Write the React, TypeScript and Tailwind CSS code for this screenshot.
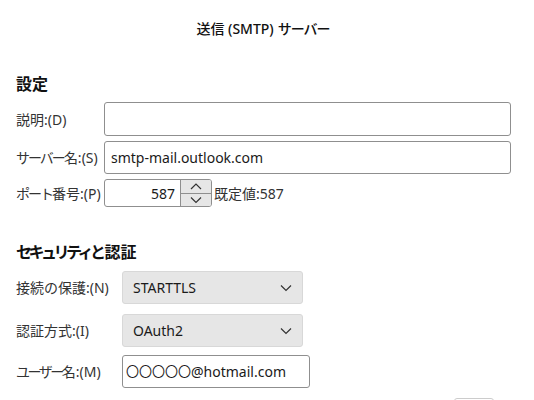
import React from 'react';

const FONT = "font-['Noto_Sans','Noto_Sans_CJK_JP',sans-serif]";

const Chevron: React.FC<{ up?: boolean; className?: string }> = ({ up, className }) => (
  <svg viewBox="0 0 12 8" className={className} fill="none" stroke="#333" strokeWidth={1.2}>
    {up ? <polyline points="1,7 6,2 11,7" /> : <polyline points="1,1.5 6,6.5 11,1.5" />}
  </svg>
);

// kana in the original font is proportional, so squeeze it a little
const Kana: React.FC<{ children: React.ReactNode; className?: string }> = ({ children, className }) => (
  <span className={className ?? 'tracking-[-2px]'}>{children}</span>
);

const Label: React.FC<{ children: React.ReactNode }> = ({ children }) => (
  <span className="text-[14px] text-[#333] whitespace-nowrap">{children}</span>
);

const TextBox: React.FC<{ children?: React.ReactNode; className?: string }> = ({ children, className }) => (
  <div
    className={`flex items-center whitespace-nowrap overflow-hidden border border-[#8f8f8f] rounded-[3px] bg-white text-[14px] text-[#1a1a1a] ${className ?? ''}`}
  >
    {children}
  </div>
);

const Select: React.FC<{ value: string }> = ({ value }) => (
  <div className="w-[181px] h-[33px] flex items-center justify-between bg-[#e6e6e6] border border-[#d8d8d8] rounded-[3px] pl-[10px] pr-[10px] text-[14px] text-[#1a1a1a]">
    <span>{value}</span>
    <Chevron className="w-[12px] h-[8px]" />
  </div>
);

export default function App() {
  return (
    <div className={`w-[534px] h-[400px] bg-white overflow-hidden ${FONT}`}>
      {/* Title */}
      <div className="h-[56px] flex items-center justify-center pr-2 text-[14px] font-medium text-[#111]">
        送信 (SMTP) <Kana className="ml-[4px] tracking-[-1px]">サーバー</Kana>
      </div>

      <div className="px-4">
        {/* 設定 */}
        <h2 className="mt-[18px] h-[20px] leading-[20px] text-[16px] font-bold text-[#111]">設定</h2>
        <div className="mt-[8px] grid grid-cols-[88px_1fr] gap-y-[5px] items-center">
          <Label>説明:(D)</Label>
          <TextBox className="h-[34px] w-[407px] px-[6px]" />

          <Label><Kana>サーバー</Kana>名:(S)</Label>
          <TextBox className="h-[33px] w-[407px] px-[6px]">smtp-mail.outlook.com</TextBox>

          <Label><Kana>ポート</Kana>番号:(P)</Label>
          <div className="flex items-center">
            <div className="w-[108px] h-[28px] flex border border-[#8f8f8f] rounded-[3px] overflow-hidden">
              <div className="flex-1 flex items-center justify-end pr-[5px] text-[14px] text-[#1a1a1a]">587</div>
              <div className="w-[31px] flex flex-col border-l border-[#8f8f8f]">
                <div className="flex-1 flex items-center justify-center bg-[#e6e6e6] border-b border-[#8f8f8f]">
                  <Chevron up className="w-[12px] h-[8px]" />
                </div>
                <div className="flex-1 flex items-center justify-center bg-[#e6e6e6]">
                  <Chevron className="w-[12px] h-[8px]" />
                </div>
              </div>
            </div>
            <span className="ml-[2px] text-[14px] text-[#333]">既定値:587</span>
          </div>
        </div>

        {/* セキュリティと認証 */}
        <h2 className="mt-[35px] h-[20px] leading-[20px] text-[16px] font-bold text-[#111]">
          <Kana className="tracking-[-3.5px]">セキュリティと</Kana>
          <span className="ml-[2px]">認証</span>
        </h2>
        <div className="mt-[9px] grid grid-cols-[106px_1fr] items-center">
          <Label>接続の保護:(N)</Label>
          <Select value="STARTTLS" />

          <div className="col-span-2 h-[10px]" />
          <Label>認証方式:(I)</Label>
          <Select value="OAuth2" />

          <div className="col-span-2 h-[8px]" />
          <Label><Kana className="tracking-[-2.5px]">ユーザー</Kana>名:(M)</Label>
          <TextBox className="h-[33px] w-[188px] px-[3px]">
            <span className="text-[13px]">〇〇〇〇〇</span>
            <span>@hotmail.com</span>
          </TextBox>
        </div>

        {/* partially visible button */}
        <div className="mt-[10px] flex justify-end pr-[24px]">
          <div className="w-[40px] h-[20px] border border-[#cccccc] rounded-[3px]" />
        </div>
      </div>
    </div>
  );
}
